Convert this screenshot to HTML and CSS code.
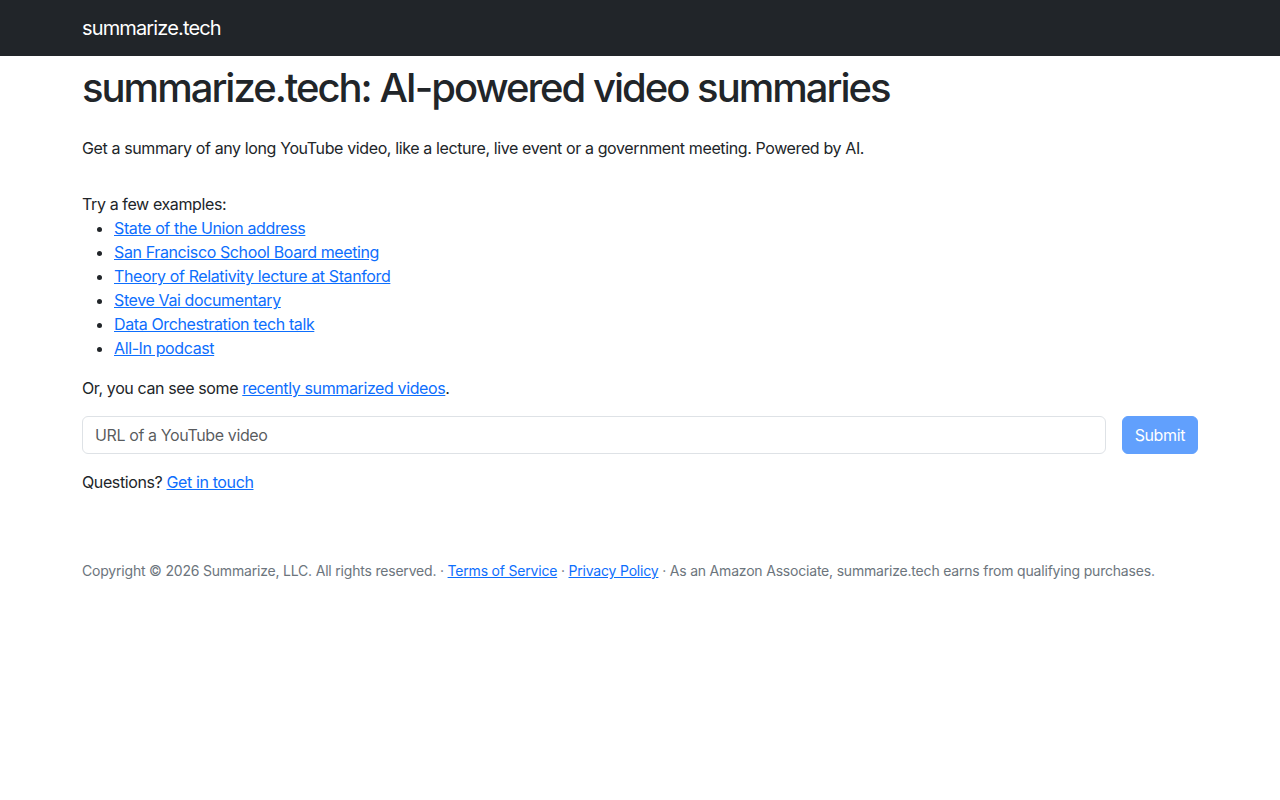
FILE: index.html
```html
<!DOCTYPE html>
<html lang="en">
<head>
<meta charset="utf-8">
<title>summarize.tech: AI-powered video summaries</title>
<link rel="stylesheet" href="styles.css">
</head>
<body>
<nav class="navbar">
  <div class="container">
    <a class="brand" href="#">summarize.tech</a>
  </div>
</nav>
<main class="container main">
  <h1 class="title">summarize.tech: AI-powered video summaries</h1>
  <p class="lead-text">Get a summary of any long YouTube video, like a lecture, live event or a government meeting. Powered by AI.</p>
  <div class="examples">
    <div>Try a few examples:</div>
    <ul class="example-list">
      <li><a href="#">State of the Union address</a></li>
      <li><a href="#">San Francisco School Board meeting</a></li>
      <li><a href="#">Theory of Relativity lecture at Stanford</a></li>
      <li><a href="#">Steve Vai documentary</a></li>
      <li><a href="#">Data Orchestration tech talk</a></li>
      <li><a href="#">All-In podcast</a></li>
    </ul>
  </div>
  <p class="para">Or, you can see some <a href="#">recently summarized videos</a>.</p>
  <form class="url-form">
    <input class="form-control" type="text" placeholder="URL of a YouTube video">
    <button class="btn" type="button" disabled>Submit</button>
  </form>
  <p class="para">Questions? <a href="#">Get in touch</a></p>
  <footer class="footer">
    Copyright © 2026 Summarize, LLC. All rights reserved. · <a href="#">Terms of Service</a> · <a href="#">Privacy Policy</a> · As an Amazon Associate, summarize.tech earns from qualifying purchases.
  </footer>
</main>
</body>
</html>
```
FILE: styles.css
```css
* { box-sizing: border-box; }
html, body {
  margin: 0;
  padding: 0;
  background: #fff;
}
body {
  font-family: Inter, "Noto Sans", "Liberation Sans", sans-serif;
  font-size: 16px;
  line-height: 24px;
  letter-spacing: -0.024em;
  color: #212529;
}
a { color: #0d6efd; text-decoration: underline; }
.container {
  max-width: 1140px;
  margin: 0 auto;
  padding: 0 12px;
}
.navbar {
  background: #212529;
  height: 56px;
  display: flex;
  align-items: center;
}
.navbar .container { width: 100%; }
.brand {
  color: #fff;
  text-decoration: none;
  font-size: 20px;
  line-height: 30px;
  letter-spacing: -0.043em;
  display: inline-block;
}
.main { padding-top: 8px; }
.title {
  font-size: 40px;
  line-height: 48px;
  font-weight: 500;
  letter-spacing: -0.05em;
  margin: 0 0 24px;
}
.lead-text { margin: 0 0 32px; }
.examples { margin: 0 0 16px; }
.example-list {
  margin: 0;
  padding-left: 32px;
}
.para { margin: 0 0 16px; }
.url-form {
  display: flex;
  gap: 16px;
  margin: 0 0 16px;
}
.form-control {
  flex: 1;
  height: 38px;
  padding: 6px 12px;
  font: inherit;
  letter-spacing: inherit;
  color: #212529;
  border: 1px solid #dee2e6;
  border-radius: 6px;
  background: #fff;
}
.form-control::placeholder { color: rgba(33, 37, 41, 0.75); }
.btn {
  height: 38px;
  padding: 6px 12px;
  font: inherit;
  letter-spacing: inherit;
  color: #fff;
  background: #0d6efd;
  border: 1px solid #0d6efd;
  border-radius: 6px;
  opacity: 0.65;
}
.footer {
  margin-top: 66px;
  font-size: 14px;
  line-height: 21px;
  letter-spacing: -0.014em;
  color: #6c757d;
}
```
